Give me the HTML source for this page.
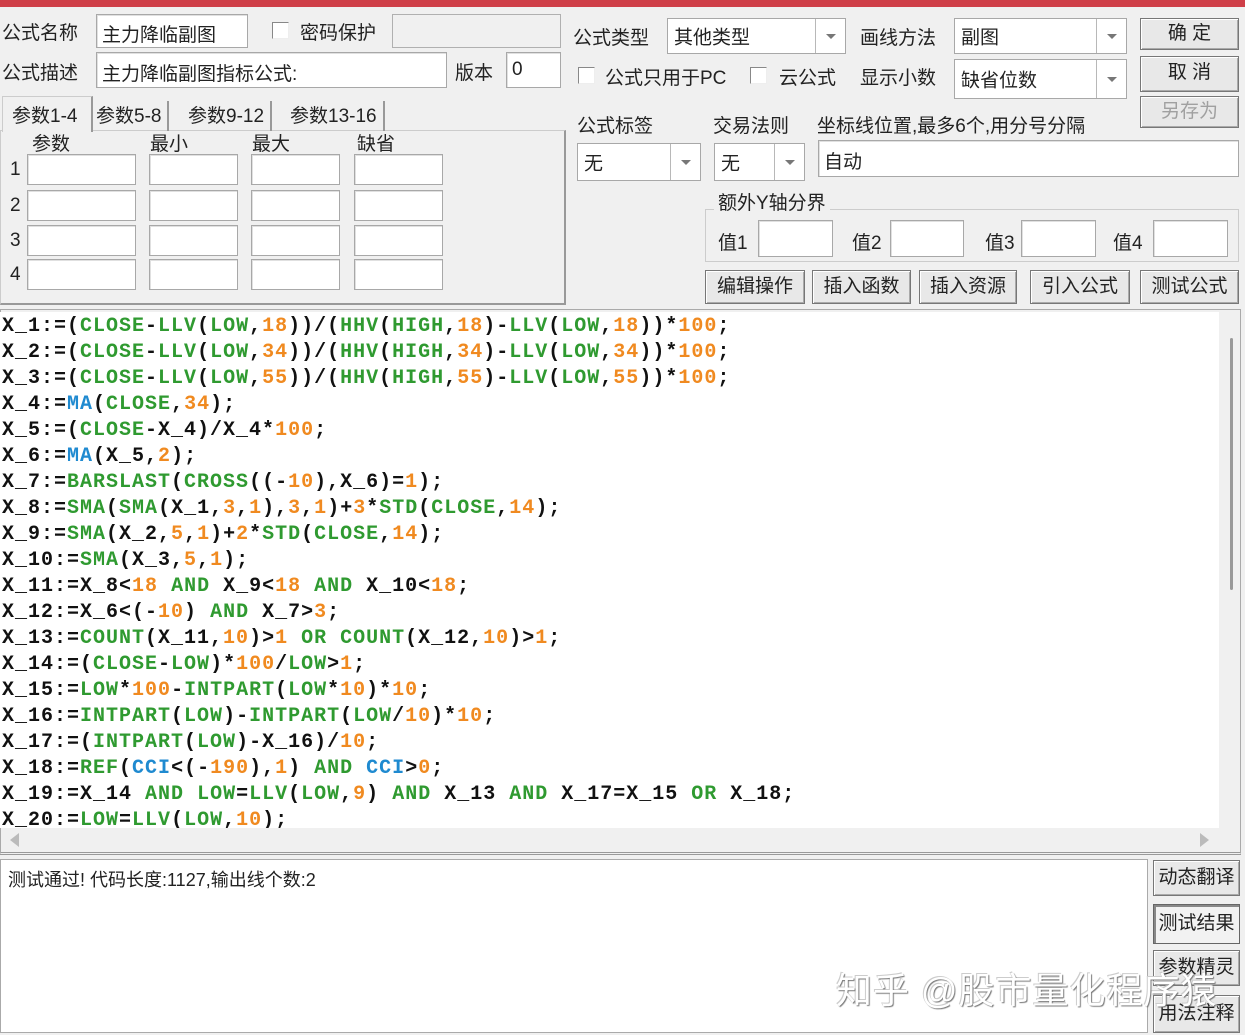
<!DOCTYPE html>
<html><head><meta charset="utf-8"><style>
*{margin:0;padding:0;box-sizing:border-box}
body{width:1245px;height:1035px;background:#f0f0f0;position:relative;overflow:hidden;font-family:"Liberation Sans","Noto Sans CJK SC",sans-serif;font-size:19px;color:#222}
.a{position:absolute;white-space:nowrap}
.in{position:absolute;background:#fff;border:1px solid #a8a8a8;box-shadow:inset 1px 1px 0 #e0e0e0}
.cb{position:absolute;width:17px;height:17px;background:#fff;border:1px solid #888;border-right-color:#eee;border-bottom-color:#eee}
.cmb{position:absolute;background:#fff;border:1px solid #a8a8a8}
.cmb .s{position:absolute;top:0;bottom:0;border-left:1px solid #b8b8b8;width:30px;right:0}
.cmb .s:after{content:"";position:absolute;left:10px;top:50%;margin-top:-2px;border-left:5px solid transparent;border-right:5px solid transparent;border-top:5px solid #777}
.cmb span{position:absolute;left:6px;top:50%;transform:translateY(-50%)}
.btn{position:absolute;background:#e8e8e8;border:1px solid #777;box-shadow:inset 1px 1px 0 #fff,inset -1px -1px 0 #aaa;text-align:center;font-size:19px}
.code{position:absolute;left:0;top:312px;width:1219px;height:516px;background:#fff;font-family:"Liberation Mono",monospace;font-weight:bold;font-size:20px;letter-spacing:1px;line-height:26px;padding-left:2px;padding-top:2px;color:#111;overflow:hidden}
.code div{white-space:pre;height:26px}
.g{color:#2f9a30}.o{color:#f08a20}.b{color:#1f8ad0}
</style></head><body>
<div class="a" style="left:0;top:0;width:1245px;height:7px;background:#cf3f48"></div>

<div class="a" style="left:2px;top:18px">公式名称</div>
<div class="in" style="left:96px;top:14px;width:152px;height:34px"><span class="a" style="left:5px;top:5px">主力降临副图</span></div>
<div class="cb" style="left:272px;top:22px"></div>
<div class="a" style="left:300px;top:18px">密码保护</div>
<div class="a" style="left:392px;top:14px;width:169px;height:34px;border:1px solid #b0b0b0;background:#f0f0f0"></div>
<div class="a" style="left:2px;top:58px">公式描述</div>
<div class="in" style="left:96px;top:52px;width:351px;height:36px"><span class="a" style="left:5px;top:6px">主力降临副图指标公式:</span></div>
<div class="a" style="left:455px;top:58px">版本</div>
<div class="in" style="left:506px;top:52px;width:55px;height:36px"><span class="a" style="left:5px;top:6px">0</span></div>

<div class="a" style="left:0;top:130px;width:566px;height:175px;border:1px solid #ccc;border-right:2px solid #999;border-bottom:2px solid #999"></div>
<div class="a" style="left:2px;top:96px;width:91px;height:36px;background:#f0f0f0;border:1px solid #ccc;border-bottom:none;border-right:2px solid #999"></div>
<div class="a" style="left:12px;top:101px">参数1-4</div>
<div class="a" style="left:96px;top:101px;border-right:2px solid #999;padding-right:6px;height:30px">参数5-8</div>
<div class="a" style="left:188px;top:101px;border-right:2px solid #999;padding-right:6px;height:30px">参数9-12</div>
<div class="a" style="left:290px;top:101px;border-right:2px solid #999;padding-right:6px;height:30px">参数13-16</div>
<div class="a" style="left:32px;top:129px">参数</div>
<div class="a" style="left:150px;top:129px">最小</div>
<div class="a" style="left:252px;top:129px">最大</div>
<div class="a" style="left:357px;top:129px">缺省</div>
<div class="a" style="left:10px;top:159px">1</div>
<div class="a" style="left:10px;top:195px">2</div>
<div class="a" style="left:10px;top:230px">3</div>
<div class="a" style="left:10px;top:264px">4</div>
<div class="in" style="left:27px;top:154px;width:109px;height:31px"></div><div class="in" style="left:149px;top:154px;width:89px;height:31px"></div><div class="in" style="left:251px;top:154px;width:89px;height:31px"></div><div class="in" style="left:354px;top:154px;width:89px;height:31px"></div>
<div class="in" style="left:27px;top:190px;width:109px;height:31px"></div><div class="in" style="left:149px;top:190px;width:89px;height:31px"></div><div class="in" style="left:251px;top:190px;width:89px;height:31px"></div><div class="in" style="left:354px;top:190px;width:89px;height:31px"></div>
<div class="in" style="left:27px;top:225px;width:109px;height:31px"></div><div class="in" style="left:149px;top:225px;width:89px;height:31px"></div><div class="in" style="left:251px;top:225px;width:89px;height:31px"></div><div class="in" style="left:354px;top:225px;width:89px;height:31px"></div>
<div class="in" style="left:27px;top:259px;width:109px;height:31px"></div><div class="in" style="left:149px;top:259px;width:89px;height:31px"></div><div class="in" style="left:251px;top:259px;width:89px;height:31px"></div><div class="in" style="left:354px;top:259px;width:89px;height:31px"></div>

<div class="a" style="left:573px;top:23px">公式类型</div>
<div class="cmb" style="left:667px;top:18px;width:179px;height:36px"><span>其他类型</span><div class="s"></div></div>
<div class="a" style="left:860px;top:23px">画线方法</div>
<div class="cmb" style="left:954px;top:18px;width:173px;height:36px"><span>副图</span><div class="s"></div></div>
<div class="btn" style="left:1140px;top:18px;width:99px;height:32px;line-height:30px">确 定</div>
<div class="cb" style="left:578px;top:67px"></div>
<div class="a" style="left:605px;top:63px">公式只用于PC</div>
<div class="cb" style="left:750px;top:67px"></div>
<div class="a" style="left:779px;top:63px">云公式</div>
<div class="a" style="left:860px;top:63px">显示小数</div>
<div class="cmb" style="left:954px;top:59px;width:173px;height:40px"><span>缺省位数</span><div class="s"></div></div>
<div class="btn" style="left:1140px;top:56px;width:99px;height:36px;line-height:32px">取 消</div>
<div class="btn" style="left:1140px;top:96px;width:99px;height:32px;line-height:30px;color:#a0a0a0">另存为</div>
<div class="a" style="left:577px;top:111px">公式标签</div>
<div class="a" style="left:713px;top:111px">交易法则</div>
<div class="a" style="left:817px;top:111px">坐标线位置,最多6个,用分号分隔</div>
<div class="cmb" style="left:577px;top:143px;width:124px;height:38px"><span>无</span><div class="s"></div></div>
<div class="cmb" style="left:714px;top:143px;width:91px;height:38px"><span>无</span><div class="s"></div></div>
<div class="in" style="left:818px;top:140px;width:421px;height:37px"><span class="a" style="left:5px;top:6px">自动</span></div>
<div class="a" style="left:705px;top:209px;width:534px;height:53px;border:1px solid #ccc"></div>
<div class="a" style="left:714px;top:188px;background:#f0f0f0;padding:0 4px">额外Y轴分界</div>
<div class="a" style="left:718px;top:228px">值1</div><div class="in" style="left:758px;top:220px;width:75px;height:37px"></div>
<div class="a" style="left:852px;top:228px">值2</div><div class="in" style="left:890px;top:220px;width:74px;height:37px"></div>
<div class="a" style="left:985px;top:228px">值3</div><div class="in" style="left:1021px;top:220px;width:75px;height:37px"></div>
<div class="a" style="left:1113px;top:228px">值4</div><div class="in" style="left:1153px;top:220px;width:75px;height:37px"></div>
<div class="btn" style="left:705px;top:270px;width:100px;height:34px;line-height:32px">编辑操作</div>
<div class="btn" style="left:812px;top:270px;width:99px;height:34px;line-height:32px">插入函数</div>
<div class="btn" style="left:919px;top:270px;width:98px;height:34px;line-height:32px">插入资源</div>
<div class="btn" style="left:1030px;top:270px;width:100px;height:34px;line-height:32px">引入公式</div>
<div class="btn" style="left:1140px;top:270px;width:99px;height:34px;line-height:32px">测试公式</div>

<div class="a" style="left:0;top:309px;width:1241px;height:546px;border:1px solid #aaa;border-bottom:3px double #999"></div>
<div class="code">
<div>X_1:=(<span class="g">CLOSE</span>-<span class="g">LLV</span>(<span class="g">LOW</span>,<span class="o">18</span>))/(<span class="g">HHV</span>(<span class="g">HIGH</span>,<span class="o">18</span>)-<span class="g">LLV</span>(<span class="g">LOW</span>,<span class="o">18</span>))*<span class="o">100</span>;</div>
<div>X_2:=(<span class="g">CLOSE</span>-<span class="g">LLV</span>(<span class="g">LOW</span>,<span class="o">34</span>))/(<span class="g">HHV</span>(<span class="g">HIGH</span>,<span class="o">34</span>)-<span class="g">LLV</span>(<span class="g">LOW</span>,<span class="o">34</span>))*<span class="o">100</span>;</div>
<div>X_3:=(<span class="g">CLOSE</span>-<span class="g">LLV</span>(<span class="g">LOW</span>,<span class="o">55</span>))/(<span class="g">HHV</span>(<span class="g">HIGH</span>,<span class="o">55</span>)-<span class="g">LLV</span>(<span class="g">LOW</span>,<span class="o">55</span>))*<span class="o">100</span>;</div>
<div>X_4:=<span class="b">MA</span>(<span class="g">CLOSE</span>,<span class="o">34</span>);</div>
<div>X_5:=(<span class="g">CLOSE</span>-X_4)/X_4*<span class="o">100</span>;</div>
<div>X_6:=<span class="b">MA</span>(X_5,<span class="o">2</span>);</div>
<div>X_7:=<span class="g">BARSLAST</span>(<span class="g">CROSS</span>((-<span class="o">10</span>),X_6)=<span class="o">1</span>);</div>
<div>X_8:=<span class="g">SMA</span>(<span class="g">SMA</span>(X_1,<span class="o">3</span>,<span class="o">1</span>),<span class="o">3</span>,<span class="o">1</span>)+<span class="o">3</span>*<span class="g">STD</span>(<span class="g">CLOSE</span>,<span class="o">14</span>);</div>
<div>X_9:=<span class="g">SMA</span>(X_2,<span class="o">5</span>,<span class="o">1</span>)+<span class="o">2</span>*<span class="g">STD</span>(<span class="g">CLOSE</span>,<span class="o">14</span>);</div>
<div>X_10:=<span class="g">SMA</span>(X_3,<span class="o">5</span>,<span class="o">1</span>);</div>
<div>X_11:=X_8&lt;<span class="o">18</span> <span class="g">AND</span> X_9&lt;<span class="o">18</span> <span class="g">AND</span> X_10&lt;<span class="o">18</span>;</div>
<div>X_12:=X_6&lt;(-<span class="o">10</span>) <span class="g">AND</span> X_7&gt;<span class="o">3</span>;</div>
<div>X_13:=<span class="g">COUNT</span>(X_11,<span class="o">10</span>)&gt;<span class="o">1</span> <span class="g">OR</span> <span class="g">COUNT</span>(X_12,<span class="o">10</span>)&gt;<span class="o">1</span>;</div>
<div>X_14:=(<span class="g">CLOSE</span>-<span class="g">LOW</span>)*<span class="o">100</span>/<span class="g">LOW</span>&gt;<span class="o">1</span>;</div>
<div>X_15:=<span class="g">LOW</span>*<span class="o">100</span>-<span class="g">INTPART</span>(<span class="g">LOW</span>*<span class="o">10</span>)*<span class="o">10</span>;</div>
<div>X_16:=<span class="g">INTPART</span>(<span class="g">LOW</span>)-<span class="g">INTPART</span>(<span class="g">LOW</span>/<span class="o">10</span>)*<span class="o">10</span>;</div>
<div>X_17:=(<span class="g">INTPART</span>(<span class="g">LOW</span>)-X_16)/<span class="o">10</span>;</div>
<div>X_18:=<span class="g">REF</span>(<span class="b">CCI</span>&lt;(-<span class="o">190</span>),<span class="o">1</span>) <span class="g">AND</span> <span class="b">CCI</span>&gt;<span class="o">0</span>;</div>
<div>X_19:=X_14 <span class="g">AND</span> <span class="g">LOW</span>=<span class="g">LLV</span>(<span class="g">LOW</span>,<span class="o">9</span>) <span class="g">AND</span> X_13 <span class="g">AND</span> X_17=X_15 <span class="g">OR</span> X_18;</div>
<div>X_20:=<span class="g">LOW</span>=<span class="g">LLV</span>(<span class="g">LOW</span>,<span class="o">10</span>);</div>
</div>
<div class="a" style="left:1230px;top:338px;width:3px;height:252px;background:#999;border-radius:2px"></div>
<div class="a" style="left:10px;top:833px;border-top:7px solid transparent;border-bottom:7px solid transparent;border-right:9px solid #bbb"></div>
<div class="a" style="left:1200px;top:833px;border-top:7px solid transparent;border-bottom:7px solid transparent;border-left:9px solid #bbb"></div>

<div class="a" style="left:0;top:859px;width:1148px;height:174px;background:#fff;border:1px solid #aaa"></div>
<div class="a" style="left:8px;top:866px;font-size:18px">测试通过! 代码长度:1127,输出线个数:2</div>
<div class="btn" style="left:1153px;top:860px;width:87px;height:36px;line-height:34px">动态翻译</div>
<div class="btn" style="left:1153px;top:904px;width:87px;height:40px;line-height:38px;background:#f2f2f2;border-color:#666;box-shadow:inset 2px 2px 0 #888">测试结果</div>
<div class="btn" style="left:1153px;top:950px;width:87px;height:36px;line-height:34px">参数精灵</div>
<div class="btn" style="left:1153px;top:995px;width:87px;height:38px;line-height:36px">用法注释</div>
<div class="a" style="left:836px;top:962px;font-size:36px;letter-spacing:1px;color:#fff;text-shadow:1px 1px 1px #777,-1px -1px 0 #ccc">知乎 @股市量化程序猿</div>
</body></html>
